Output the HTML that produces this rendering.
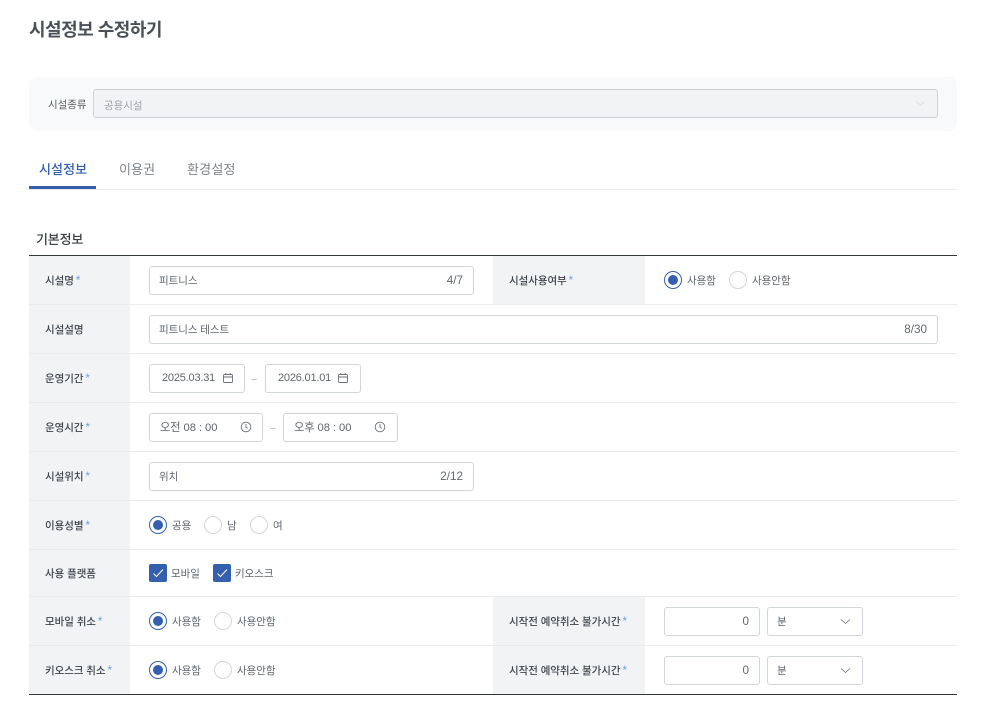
<!DOCTYPE html>
<html lang="ko">
<head>
<meta charset="utf-8">
<title>시설정보 수정하기</title>
<style>
*{box-sizing:border-box;margin:0;padding:0}
html,body{width:991px;height:728px;background:#fff;overflow:hidden}
body{position:relative;font-family:"Liberation Sans","Noto Sans CJK KR",sans-serif;color:#495057}
.a{position:absolute}
.t{position:absolute;white-space:nowrap;line-height:16px;height:16px;font-size:10.5px;letter-spacing:-.05px;margin-top:1px}
.lb{font-weight:500;color:#40464d}
.lb i{font-style:normal;color:#6f9fe0;margin-left:2px;font-weight:500;font-size:11.5px}
.bx{position:absolute;height:29px;border:1px solid #d2d5d9;border-radius:3px;background:#fff}
.hd{position:absolute;background:#f1f3f5}
.ln{position:absolute;left:29px;width:928px;height:1px;background:#e9ebed}
.r{position:absolute;width:18px;height:18px;border-radius:50%;border:1px solid #d3d6da;background:#fff}
.r.on{border-color:#345fae}
.r.on:after{content:"";position:absolute;left:3px;top:3px;width:10px;height:10px;border-radius:50%;background:#345fae}
.c{position:absolute;width:18px;height:18px;border-radius:2px;background:#345fae}
svg{position:absolute;display:block}
.v{color:#5f656c}
.n{color:#5f656c;font-size:11px;margin-top:0}
.d{letter-spacing:-.2px}
.m{font-size:11.7px;letter-spacing:0;margin-top:1px;color:#62686e}
.tm{font-size:11.2px}
</style>
</head>
<body>
<div class="t" style="left:29px;top:17px;height:24px;line-height:24px;font-size:18px;font-weight:700;letter-spacing:-.5px;color:#495057">시설정보 수정하기</div>

<div class="a" style="left:29px;top:77px;width:928px;height:54px;background:#f8f9fa;border-radius:8px"></div>
<div class="t" style="left:48px;top:96px;color:#5a6067">시설종류</div>
<div class="bx" style="left:93px;top:89px;width:845px;background:#f1f3f5;border-color:#ced1d6"></div>
<div class="t" style="left:104px;top:97px;color:#a0a4a9">공용시설</div>
<svg style="left:915px;top:100px" width="11" height="8" viewBox="0 0 11 8"><path d="M1 1.5 5.5 5 10 1.5" fill="none" stroke="#dcdfe2" stroke-width=".9"/></svg>

<div class="t" style="left:39px;top:161px;font-size:13px;font-weight:500;letter-spacing:.1px;color:#345fae">시설정보</div>
<div class="t" style="left:119px;top:161px;font-size:13px;letter-spacing:.1px;color:#7f858b">이용권</div>
<div class="t" style="left:187px;top:161px;font-size:13px;letter-spacing:.2px;color:#7f858b">환경설정</div>
<div class="a" style="left:29px;top:189px;width:928px;height:1px;background:#e9ebed"></div>
<div class="a" style="left:29px;top:186px;width:67px;height:3px;background:#345fae"></div>

<div class="t" style="left:36px;top:231px;font-size:13px;font-weight:500;letter-spacing:-.15px;color:#3c4146">기본정보</div>
<div class="a" style="left:29px;top:255px;width:928px;height:1px;background:#33363a"></div>

<div class="hd" style="left:29px;top:256px;width:101px;height:438px"></div>
<div class="hd" style="left:493px;top:256px;width:152px;height:48px"></div>
<div class="hd" style="left:493px;top:597px;width:152px;height:97px"></div>

<div class="ln" style="top:304px"></div>
<div class="ln" style="top:353px"></div>
<div class="ln" style="top:402px"></div>
<div class="ln" style="top:451px"></div>
<div class="ln" style="top:500px"></div>
<div class="ln" style="top:549px"></div>
<div class="ln" style="top:596px"></div>
<div class="ln" style="top:645px"></div>
<div class="a" style="left:29px;top:694px;width:928px;height:1px;background:#33363a"></div>

<div class="t lb" style="left:45px;top:272px">시설명<i>*</i></div>
<div class="t lb" style="left:45px;top:321px">시설설명</div>
<div class="t lb" style="left:45px;top:370px">운영기간<i>*</i></div>
<div class="t lb" style="left:45px;top:419px">운영시간<i>*</i></div>
<div class="t lb" style="left:45px;top:468px">시설위치<i>*</i></div>
<div class="t lb" style="left:45px;top:517px">이용성별<i>*</i></div>
<div class="t lb" style="left:45px;top:565px">사용 플랫폼</div>
<div class="t lb" style="left:45px;top:613px">모바일 취소<i>*</i></div>
<div class="t lb" style="left:45px;top:662px">키오스크 취소<i>*</i></div>
<div class="t lb" style="left:509px;top:272px">시설사용여부<i>*</i></div>
<div class="t lb" style="left:509px;top:613px">시작전 예약취소 불가시간<i>*</i></div>
<div class="t lb" style="left:509px;top:662px">시작전 예약취소 불가시간<i>*</i></div>

<div class="bx" style="left:149px;top:266px;width:325px"></div>
<div class="t v" style="left:159px;top:272px">피트니스</div>
<div class="t n m" style="right:528px;top:272px">4/7</div>

<div class="r on" style="left:664px;top:271px"></div>
<div class="t v" style="left:687px;top:272px">사용함</div>
<div class="r" style="left:729px;top:271px"></div>
<div class="t v" style="left:752px;top:272px">사용안함</div>

<div class="bx" style="left:149px;top:315px;width:789px"></div>
<div class="t v" style="left:159px;top:321px">피트니스 테스트</div>
<div class="t n m" style="right:64px;top:321px">8/30</div>

<div class="bx" style="left:149px;top:364px;width:96px"></div>
<div class="t n d" style="left:162px;top:370px">2025.03.31</div>
<svg style="left:222px;top:372px" width="12" height="12" viewBox="0 0 12 12"><path d="M2.5 2.5h7a1 1 0 0 1 1 1v6a1 1 0 0 1-1 1h-7a1 1 0 0 1-1-1v-6a1 1 0 0 1 1-1zM1.5 5h9M3.8 1v2M8.2 1v2" fill="none" stroke="#6a7076" stroke-width=".9"/></svg>
<div class="t" style="left:251px;top:371px;color:#a0a4a9">~</div>
<div class="bx" style="left:265px;top:364px;width:96px"></div>
<div class="t n d" style="left:278px;top:370px">2026.01.01</div>
<svg style="left:337px;top:372px" width="12" height="12" viewBox="0 0 12 12"><path d="M2.5 2.5h7a1 1 0 0 1 1 1v6a1 1 0 0 1-1 1h-7a1 1 0 0 1-1-1v-6a1 1 0 0 1 1-1zM1.5 5h9M3.8 1v2M8.2 1v2" fill="none" stroke="#6a7076" stroke-width=".9"/></svg>

<div class="bx" style="left:149px;top:413px;width:114px"></div>
<div class="t n tm" style="left:160px;top:420px">오전 08 : 00</div>
<svg style="left:240px;top:421px" width="12" height="12" viewBox="0 0 12 12"><circle cx="6" cy="6" r="4.8" fill="none" stroke="#6a7076" stroke-width=".9"/><path d="M6 3v3.2l1.8 1.2" fill="none" stroke="#6a7076" stroke-width=".9"/></svg>
<div class="t" style="left:270px;top:420px;color:#a0a4a9">~</div>
<div class="bx" style="left:283px;top:413px;width:115px"></div>
<div class="t n tm" style="left:294px;top:420px">오후 08 : 00</div>
<svg style="left:374px;top:421px" width="12" height="12" viewBox="0 0 12 12"><circle cx="6" cy="6" r="4.8" fill="none" stroke="#6a7076" stroke-width=".9"/><path d="M6 3v3.2l1.8 1.2" fill="none" stroke="#6a7076" stroke-width=".9"/></svg>

<div class="bx" style="left:149px;top:462px;width:325px"></div>
<div class="t v" style="left:159px;top:468px">위치</div>
<div class="t n m" style="right:528px;top:468px">2/12</div>

<div class="r on" style="left:149px;top:516px"></div>
<div class="t v" style="left:172px;top:517px">공용</div>
<div class="r" style="left:204px;top:516px"></div>
<div class="t v" style="left:227px;top:517px">남</div>
<div class="r" style="left:250px;top:516px"></div>
<div class="t v" style="left:273px;top:517px">여</div>

<div class="c" style="left:149px;top:564px"><svg style="left:3px;top:4px" width="12" height="10" viewBox="0 0 12 10"><path d="M1.5 5.5 4.5 8.5 11 1.5" fill="none" stroke="#fff" stroke-width="1"/></svg></div>
<div class="t v" style="left:171px;top:565px">모바일</div>
<div class="c" style="left:213px;top:564px"><svg style="left:3px;top:4px" width="12" height="10" viewBox="0 0 12 10"><path d="M1.5 5.5 4.5 8.5 11 1.5" fill="none" stroke="#fff" stroke-width="1"/></svg></div>
<div class="t v" style="left:235px;top:565px">키오스크</div>

<div class="r on" style="left:149px;top:612px"></div>
<div class="t v" style="left:172px;top:613px">사용함</div>
<div class="r" style="left:214px;top:612px"></div>
<div class="t v" style="left:237px;top:613px">사용안함</div>

<div class="r on" style="left:149px;top:661px"></div>
<div class="t v" style="left:172px;top:662px">사용함</div>
<div class="r" style="left:214px;top:661px"></div>
<div class="t v" style="left:237px;top:662px">사용안함</div>

<div class="bx" style="left:664px;top:607px;width:96px"></div>
<div class="t n m" style="right:242px;top:613px">0</div>
<div class="bx" style="left:767px;top:607px;width:96px"></div>
<div class="t v" style="left:777px;top:613px">분</div>
<svg style="left:840px;top:618px" width="11" height="8" viewBox="0 0 11 8"><path d="M1 1.5 5.5 5.5 10 1.5" fill="none" stroke="#6a7076" stroke-width=".8"/></svg>

<div class="bx" style="left:664px;top:656px;width:96px"></div>
<div class="t n m" style="right:242px;top:662px">0</div>
<div class="bx" style="left:767px;top:656px;width:96px"></div>
<div class="t v" style="left:777px;top:662px">분</div>
<svg style="left:840px;top:667px" width="11" height="8" viewBox="0 0 11 8"><path d="M1 1.5 5.5 5.5 10 1.5" fill="none" stroke="#6a7076" stroke-width=".8"/></svg>
</body>
</html>
